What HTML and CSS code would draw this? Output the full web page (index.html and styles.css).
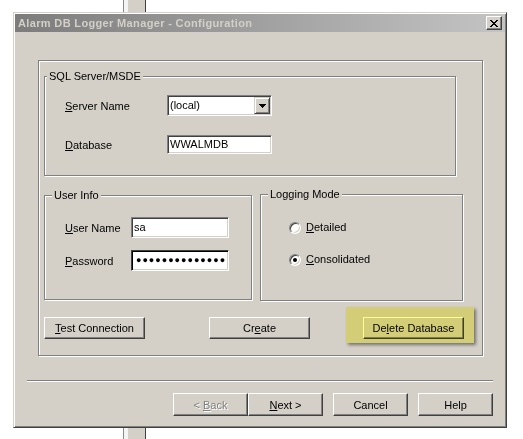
FILE: index.html
```html
<!DOCTYPE html>
<html>
<head>
<meta charset="utf-8">
<title>Alarm DB Logger Manager - Configuration</title>
<link rel="stylesheet" href="styles.css">
</head>
<body>
<div class="backdrop-bar"></div>
<div class="window">
  <div class="titlebar">
    <span class="title">Alarm DB Logger Manager - Configuration</span>
    <span class="close"><svg width="8" height="7" viewBox="0 0 8 7" shape-rendering="crispEdges"><path d="M0 0h2v1H0zM6 0h2v1H6zM1 1h2v1H1zM5 1h2v1H5zM2 2h4v1H2zM3 3h2v1H3zM2 4h4v1H2zM1 5h2v1H1zM5 5h2v1H5zM0 6h2v1H0zM6 6h2v1H6z" fill="#000"/></svg></span>
  </div>
  <div class="dlg">
    <div class="frame">
      <div class="group sql">
        <span class="legend legend-sql">SQL Server/MSDE</span>
        <div class="form sql-form">
          <span class="lbl"><u>S</u>erver Name</span>
          <div class="combo sunken">
            <span class="combo-text">(local)</span>
            <span class="combo-btn"><svg width="7" height="4" viewBox="0 0 7 4" shape-rendering="crispEdges"><path d="M0 0h7v1H0zM1 1h5v1H1zM2 2h3v1H2zM3 3h1v1H3z" fill="#000"/></svg></span>
          </div>
          <span class="lbl lbl-db"><u>D</u>atabase</span>
          <div class="edit sunken">WWALMDB</div>
        </div>
      </div>
      <div class="row2">
        <div class="group user">
          <span class="legend">User Info</span>
          <div class="form user-form">
            <span class="lbl"><u>U</u>ser Name</span>
            <div class="edit sunken">sa</div>
            <span class="lbl"><u>P</u>assword</span>
            <div class="edit sunken pw"><span class="dots">●●●●●●●●●●●●●●</span></div>
          </div>
        </div>
        <div class="group mode">
          <span class="legend">Logging Mode</span>
          <div class="radios">
            <div class="radio-row"><span class="radio"></span><span><u>D</u>etailed</span></div>
            <div class="radio-row"><span class="radio checked"></span><span><u>C</u>onsolidated</span></div>
          </div>
        </div>
      </div>
      <div class="actions">
        <span class="btn btn-test"><span><u>T</u>est Connection</span></span>
        <span class="btn btn-create"><span>Cr<u>e</u>ate</span></span>
        <span class="hl-wrap">
          <span class="btn btn-del"><span>De<u>l</u>ete Database</span></span>
          <span class="hl"></span>
        </span>
      </div>
    </div>
    <div class="sep"></div>
    <div class="wizard">
      <span class="btn wbtn disabled"><span>&lt; <u>B</u>ack</span></span>
      <span class="btn wbtn"><span><u>N</u>ext &gt;</span></span>
      <span class="btn wbtn gap"><span>Cancel</span></span>
      <span class="btn wbtn gap"><span>Help</span></span>
    </div>
  </div>
</div>
</body>
</html>
```

FILE: styles.css
```css
* { box-sizing: border-box; }
html, body { margin: 0; }
body {
  width: 523px;
  height: 439px;
  padding: 12px 0 0 13px;
  background: #fff;
  position: relative;
  overflow: hidden;
  font-family: "Liberation Sans", Arial, sans-serif;
  font-size: 11px;
  color: #000;
}
u { text-decoration: underline; text-underline-offset: 1px; }

.backdrop-bar {
  position: absolute;
  left: 123px;
  top: 0;
  width: 23px;
  height: 439px;
  background: #d4d0c8;
  border-left: 1px solid #8a8a8a;
  border-right: 1px solid #404040;
  box-shadow: inset 4px 0 #f4f4f4;
}

.window {
  position: relative;
  z-index: 1;
  width: 494px;
  height: 416px;
  background: #d4d0c8;
  border: 1px solid;
  border-color: #d4d0c8 #404040 #404040 #d4d0c8;
  box-shadow: inset 1px 1px #fff, inset -1px -1px #808080;
  padding: 1px;
  display: flex;
  flex-direction: column;
}

.titlebar {
  height: 18px;
  display: flex;
  align-items: center;
  padding: 0 3px 0 3px;
  background: linear-gradient(to right, #7c7c7c, #c4c4c4);
}
.title {
  flex: 1;
  font-weight: bold;
  color: #d4d0c8;
  font-size: 11px;
  line-height: 13px;
  letter-spacing: 0.35px;
}
.close {
  width: 16px;
  height: 14px;
  display: flex;
  align-items: center;
  justify-content: center;
  background: #d4d0c8;
  border: 1px solid;
  border-color: #fff #404040 #404040 #fff;
  box-shadow: inset -1px -1px #808080;
}

.dlg {
  flex: 1;
  padding-top: 28px;
  display: flex;
  flex-direction: column;
}

.frame {
  margin: 0 22px 0 23px;
  height: 296px;
  border: 1px solid #808080;
  box-shadow: inset 1px 1px #fff, 1px 1px #fff;
  padding: 15px 0 0 5px;
}

.group {
  position: relative;
  border: 1px solid #808080;
  box-shadow: inset 1px 1px #fff, 1px 1px #fff;
}
.legend {
  position: absolute;
  top: -7px;
  left: 7px;
  padding: 0 2px;
  line-height: 13px;
  background: #d4d0c8;
}
.legend-sql { left: 2px; }

.sql { width: 412px; height: 100px; }
.form {
  display: grid;
  align-items: center;
}
.sql-form {
  padding: 18px 0 0 20px;
  grid-template-columns: 102px 105px;
  grid-template-rows: 21px 19px;
  row-gap: 19px;
}
.lbl { line-height: 13px; padding-top: 2px; }

.sunken {
  background: #fff;
  border: 1px solid;
  border-color: #808080 #fff #fff #808080;
  box-shadow: inset 1px 1px #404040, inset -1px -1px #d4d0c8;
}
.edit {
  height: 100%;
  display: flex;
  align-items: center;
  padding: 0 2px;
  line-height: 13px;
}
.combo {
  height: 100%;
  display: flex;
  align-items: center;
  padding: 1px 1px 1px 2px;
}
.combo-text { flex: 1; line-height: 13px; }
.combo-btn {
  width: 16px;
  height: 17px;
  display: flex;
  align-items: center;
  justify-content: center;
  background: #d4d0c8;
  border: 1px solid;
  border-color: #d4d0c8 #404040 #404040 #d4d0c8;
  box-shadow: inset 1px 1px #fff, inset -1px -1px #808080;
}

.row2 {
  display: flex;
  align-items: flex-start;
  margin-top: 18px;
}
.user { width: 208px; height: 105px; margin-top: 1px; }
.mode { width: 203px; height: 107px; margin-left: 8px; }
.user-form {
  padding: 21px 0 0 20px;
  grid-template-columns: 66px 98px;
  grid-template-rows: 21px 21px;
  row-gap: 12px;
}
.pw {
  border-color: #404040 #fff #fff #404040;
  box-shadow: inset 1px 1px #000, inset -1px -1px #d4d0c8;
}
.dots {
  font-family: "Liberation Sans", "DejaVu Sans", sans-serif;
  font-size: 9px;
  letter-spacing: 1px;
  line-height: 13px;
  padding-left: 2px;
  white-space: nowrap;
}

.radios {
  padding: 26px 0 0 28px;
  display: flex;
  flex-direction: column;
  row-gap: 19px;
}
.radio-row {
  display: flex;
  align-items: center;
  column-gap: 5px;
  line-height: 13px;
}
.radio {
  width: 12px;
  height: 12px;
  border-radius: 50%;
  background: #fff;
  border: 1px solid;
  border-color: #808080 #fff #fff #808080;
  box-shadow: inset 1px 1px #404040, inset -1px -1px #d4d0c8;
  display: flex;
  align-items: center;
  justify-content: center;
}
.radio.checked::after {
  content: "";
  width: 4px;
  height: 4px;
  border-radius: 50%;
  background: #000;
}

.actions {
  display: flex;
  margin-top: 16px;
}
.btn {
  display: flex;
  align-items: center;
  justify-content: center;
  height: 22px;
  width: 101px;
  background: #d4d0c8;
  border: 1px solid;
  border-color: #fff #404040 #404040 #fff;
  box-shadow: inset -1px -1px #808080;
  line-height: 13px;
  padding-top: 1px;
  white-space: pre;
}
.btn-create { margin-left: 64px; }
.hl-wrap {
  position: relative;
  display: flex;
  margin-left: 53px;
}
.hl {
  position: absolute;
  left: -17px;
  top: -10px;
  width: 128px;
  height: 36px;
  background: #fffc98;
  mix-blend-mode: multiply;
  box-shadow: 2px 2px 3px rgba(0, 0, 0, 0.45);
}

.sep {
  margin: 24px 12px 0 12px;
  border-top: 1px solid #808080;
  border-bottom: 1px solid #fff;
}
.wizard {
  display: flex;
  justify-content: flex-end;
  margin: 11px 12px 0 12px;
}
.wbtn { width: 75px; height: 23px; }
.wbtn.gap { margin-left: 10px; }
.disabled {
  color: #808080;
  text-shadow: 1px 1px #fff;
}
```
